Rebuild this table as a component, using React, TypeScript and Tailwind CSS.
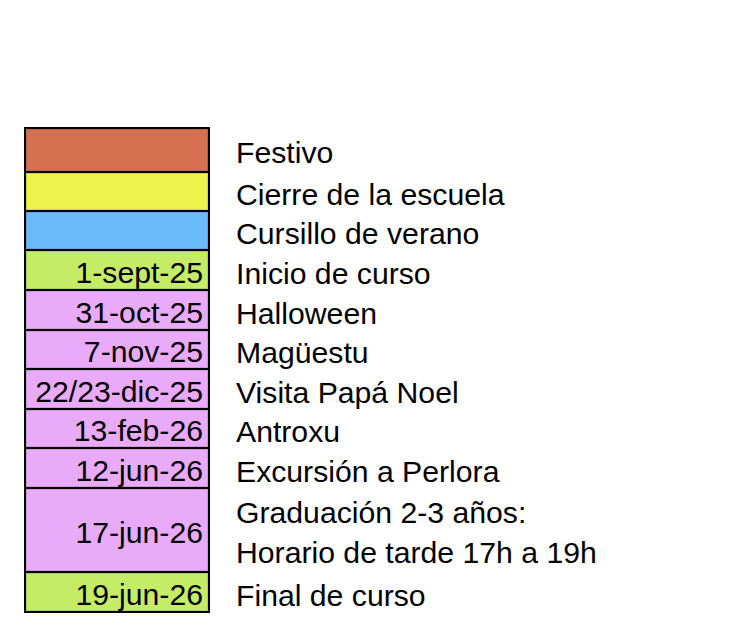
import React from "react";

type Row = {
  color: string;
  date?: string;
  labels: string[];
  h: string;
  first?: boolean;
  last?: boolean;
};

const rows: Row[] = [
  { color: "bg-[#d4704f]", labels: ["Festivo"], h: "h-[46px]", first: true },
  { color: "bg-[#eef24b]", labels: ["Cierre de la escuela"], h: "h-[39px]" },
  { color: "bg-[#6bbbfb]", labels: ["Cursillo de verano"], h: "h-[39px]" },
  { color: "bg-[#c4ec66]", date: "1-sept-25", labels: ["Inicio de curso"], h: "h-[40px]" },
  { color: "bg-[#e9aaf9]", date: "31-oct-25", labels: ["Halloween"], h: "h-[40px]" },
  { color: "bg-[#e9aaf9]", date: "7-nov-25", labels: ["Magüestu"], h: "h-[39px]" },
  { color: "bg-[#e9aaf9]", date: "22/23-dic-25", labels: ["Visita Papá Noel"], h: "h-[40px]" },
  { color: "bg-[#e9aaf9]", date: "13-feb-26", labels: ["Antroxu"], h: "h-[39px]" },
  { color: "bg-[#e9aaf9]", date: "12-jun-26", labels: ["Excursión a Perlora"], h: "h-[40px]" },
  {
    color: "bg-[#e9aaf9]",
    date: "17-jun-26",
    labels: ["Graduación 2-3 años:", "Horario de tarde 17h a 19h"],
    h: "h-[84px]",
  },
  { color: "bg-[#c4ec66]", date: "19-jun-26", labels: ["Final de curso"], h: "h-[40px]", last: true },
];

export default function App() {
  return (
    <div
      className="w-[744px] h-[643px] bg-white text-black pt-[127px] pl-[24px]"
      style={{ fontFamily: '"Liberation Sans", Arial, sans-serif' }}
    >
      <div className="flex flex-col">
        {rows.map((r, i) => (
          <div key={i} className={`flex ${r.h}`}>
            <div
              className={`w-[186px] border-x-2 border-black ${r.first ? "border-t-2" : ""} border-b-2`}
            >
              <div
                className={`h-full ${r.color} shadow-[inset_0_0_0_1px_rgba(0,0,0,0.12)] flex items-center justify-end pr-[5px] ${r.first ? "pt-[6px]" : "pt-[5px]"} text-[30.2px] leading-[30px]`}
              >
                {r.date ?? ""}
              </div>
            </div>
            <div
              className={`flex-1 pl-[26px] flex flex-col justify-center text-[30.2px] ${r.labels.length > 1 ? "leading-[40px] pt-[4px]" : "leading-[30px]"} ${r.first ? "pt-[6px]" : r.labels.length > 1 ? "" : "pt-[5px]"}`}
            >
              {r.labels.map((l, j) => (
                <div key={j} className="whitespace-nowrap">
                  {l}
                </div>
              ))}
            </div>
          </div>
        ))}
      </div>
    </div>
  );
}
